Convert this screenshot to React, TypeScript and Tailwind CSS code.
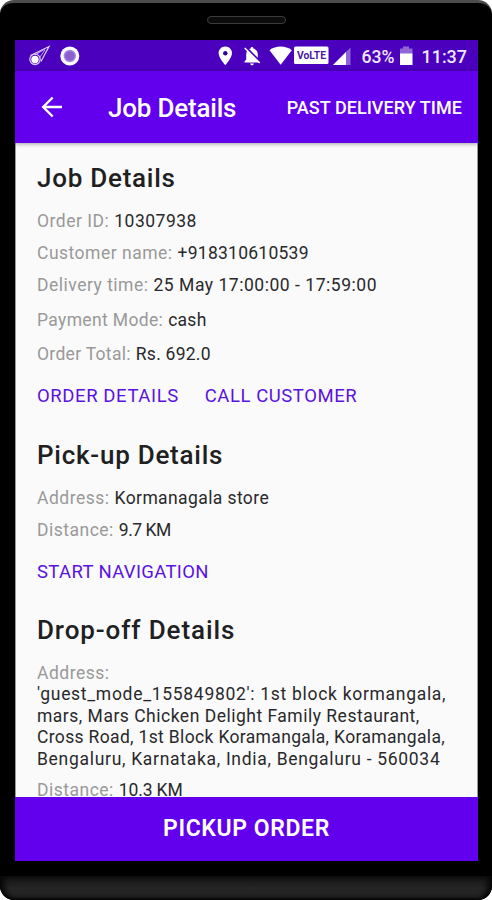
import React from 'react';

function StatusBar() {
  return (
    <div className="flex h-[31px] shrink-0 items-center bg-[#4b00bd] text-white">
      <svg width="463" height="31" viewBox="15 40 463 31" fill="none" className="block">
        {/* comet */}
        <path d="M30.5 55.5 49 46.5 41 61.5" stroke="#e3d3ff" strokeWidth="1.2" />
        <path d="M35 55 45 49M40 57l5-7" stroke="#c4a6f2" strokeWidth="1" />
        <circle cx="35" cy="59.3" r="5.2" stroke="#d9c5fb" strokeWidth="1.3" />
        <circle cx="35" cy="59.5" r="3.7" fill="#fff" />
        {/* record dot */}
        <circle cx="69.8" cy="56" r="9.5" fill="#fff" />
        <circle cx="69.8" cy="56" r="6.2" fill="#a98adf" />
        <circle cx="69.8" cy="56" r="4.8" fill="#8a5fd0" />
        {/* location */}
        <path
          d="M225.3 46.5c-3.8 0-6.7 2.9-6.7 6.6 0 4.8 6.7 12.2 6.7 12.2s6.7-7.4 6.7-12.2c0-3.7-2.9-6.6-6.7-6.6z"
          fill="#fff"
        />
        <circle cx="225.3" cy="53.2" r="2.2" fill="#32009a" />
        {/* muted bell */}
        <path
          d="M252 47c-.9 0-1.4.6-1.4 1.5-3 .7-4.4 3-4.4 6v5l-1.7 2v1h15v-1l-1.7-2v-5c0-3-1.4-5.3-4.4-6 0-.9-.5-1.5-1.4-1.5zM250.2 63.5h3.6c0 1-.8 1.8-1.8 1.8s-1.8-.8-1.8-1.8z"
          fill="#fff"
        />
        <path d="M245.7 47 260.7 62" stroke="#4b00bd" strokeWidth="2" />
        <path d="M244.7 48 259.7 63" stroke="#fff" strokeWidth="1.5" />
        {/* wifi */}
        <path d="M269.5 50.3C275.5 45.3 285.8 45.3 291.8 50.3L280.7 64.7z" fill="#fff" />
        {/* VoLTE */}
        <rect x="294" y="46.5" width="34.5" height="17.5" rx="1.5" fill="#fff" />
        <text
          x="297"
          y="59.3"
          textLength="29"
          lengthAdjust="spacingAndGlyphs"
          className="fill-[#4b16a0] font-[Roboto,sans-serif] text-[10.5px] font-bold"
        >
          VoLTE
        </text>
        {/* signal */}
        <path d="M333 65 350.5 47.5V65z" fill="#8e62d9" />
        <path d="M333 65 346 52V65z" fill="#fff" />
        <text
          x="361.5"
          y="62.7"
          textLength="33"
          lengthAdjust="spacingAndGlyphs"
          className="fill-[#f1e8ff] font-[Roboto,sans-serif] text-[18.5px] font-medium"
        >
          63%
        </text>
        {/* battery */}
        <path d="M400 48.5h3v-2h6v2h3.500V54H400z" fill="#9068d6" />
        <path d="M400 53.500h12.500V65H400z" fill="#fff" />
        <text
          x="421.5"
          y="62.7"
          textLength="45.5"
          lengthAdjust="spacingAndGlyphs"
          className="fill-[#f1e8ff] font-[Roboto,sans-serif] text-[18.5px] font-medium"
        >
          11:37
        </text>
      </svg>
    </div>
  );
}

function Toolbar() {
  return (
    <div className="z-10 flex h-[72px] shrink-0 items-center bg-[#6200ee] pr-[16px] pl-[26px] text-white shadow-[0_1px_4px_rgba(0,0,0,0.35)]">
      <svg width="22" height="22" viewBox="0 0 22 22" fill="none" stroke="#fff" strokeWidth="2.4">
        <path d="M11.700 1.500 2.200 11l9.500 9.500M2.200 11H21" />
      </svg>
      <h1 className="ml-[45px] pt-[3px] text-[26px] font-medium tracking-[-0.2px] whitespace-nowrap">Job Details</h1>
      <span className="ml-auto text-[18px] font-medium tracking-[0.05px] whitespace-nowrap">
        PAST DELIVERY TIME
      </span>
    </div>
  );
}

function Heading({ children, className = '' }: { children: React.ReactNode; className?: string }) {
  return (
    <h2 className={`h-8 text-[26px] leading-8 font-medium whitespace-nowrap text-[#202022] ${className}`}>
      {children}
    </h2>
  );
}

type FieldProps = {
  label: string;
  value: string;
  className?: string;
  labelClass?: string;
  valueClass?: string;
};

function Field({
  label,
  value,
  className = '',
  labelClass = 'tracking-[0.5px]',
  valueClass = 'tracking-[0.25px]',
}: FieldProps) {
  return (
    <p className={`flex h-[22px] gap-[5px] text-[17.5px] leading-[22px] whitespace-nowrap ${className}`}>
      <span className={`text-[#999] ${labelClass}`}>{label}</span>
      <span className={`text-[#29292b] ${valueClass}`}>{value}</span>
    </p>
  );
}

export default function App() {
  return (
    <div className="flex h-[900px] w-[492px] flex-col bg-white font-[Roboto,sans-serif]">
      <div className="flex h-full flex-col overflow-hidden rounded-[14px] border-t-[3px] border-[#4c4c4c] bg-black">
        <div className="flex h-[37px] shrink-0 justify-center pt-[13px]">
          <div className="h-[8px] w-[79px] rounded-full border border-[#3c3c3c] bg-[#0c0c0c]" />
        </div>
        <div className="mr-[14px] ml-[15px] flex h-[821px] shrink-0 flex-col overflow-hidden bg-[#fafafa]">
          <StatusBar />
          <Toolbar />
          <main className="min-h-0 flex-1 overflow-hidden border-x border-[#999] px-[21px] pt-[19px]">
            <Heading className="tracking-[0.75px]">Job Details</Heading>
            <Field className="mt-[16px]" valueClass="tracking-[0.5px]" label="Order ID:" value="10307938" />
            <Field className="mt-[10px]" label="Customer name:" value="+918310610539" />
            <Field
              className="mt-[10px]"
              valueClass="tracking-[0.53px]"
              label="Delivery time:"
              value="25 May 17:00:00 - 17:59:00"
            />
            <Field className="mt-[13px]" labelClass="tracking-[0.35px]" label="Payment Mode:" value="cash" />
            <Field className="mt-[12px]" labelClass="tracking-[0.3px]" label="Order Total:" value="Rs. 692.0" />
            <div className="mt-[20px] flex h-[22px] gap-[26px] text-[18.5px] leading-[22px] whitespace-nowrap text-[#5b12e0]">
              <span className="tracking-[0.6px]">ORDER DETAILS</span>
              <span className="tracking-[0.55px]">CALL CUSTOMER</span>
            </div>
            <Heading className="mt-[32px] tracking-[0.75px]">Pick-up Details</Heading>
            <Field
              className="mt-[16px]"
              labelClass="tracking-[0.5px]"
              valueClass="tracking-[0.4px]"
              label="Address:"
              value="Kormanagala store"
            />
            <Field className="mt-[10px]" valueClass="tracking-[-0.5px]" label="Distance:" value="9.7 KM" />
            <div className="mt-[20px] h-[22px] text-[18.5px] leading-[22px] tracking-[0.35px] whitespace-nowrap text-[#5b12e0]">
              START NAVIGATION
            </div>
            <Heading className="mt-[31px] tracking-[0.9px]">Drop-off Details</Heading>
            <div className="mt-[16.5px] text-[17.5px] leading-[21.5px] whitespace-nowrap text-[#29292b]">
              <p className="tracking-[0.5px] text-[#999]">Address:</p>
              <p className="tracking-[0.7px]">'guest_mode_155849802': 1st block kormangala,</p>
              <p className="tracking-[0.5px]">mars, Mars Chicken Delight Family Restaurant,</p>
              <p className="tracking-[0.34px]">Cross Road, 1st Block Koramangala, Koramangala,</p>
              <p className="tracking-[0.7px]">Bengaluru, Karnataka, India, Bengaluru - 560034</p>
            </div>
            <Field className="mt-[9px]" valueClass="tracking-[-0.15px]" label="Distance:" value="10.3 KM" />
          </main>
          <button className="h-[64px] shrink-0 bg-[#6200ee] pt-px text-[23px] font-semibold tracking-[0.6px] text-white">
            PICKUP ORDER
          </button>
        </div>
        <div className="h-[15px] shrink-0 bg-black" />
        <div className="flex-1 rounded-b-[14px] bg-linear-to-b from-[#141414] via-[#252525] to-[#222] shadow-[inset_0_-1px_2px_#000,inset_5px_0_5px_#0a0a0a,inset_-5px_0_5px_#0a0a0a]" />
      </div>
    </div>
  );
}
